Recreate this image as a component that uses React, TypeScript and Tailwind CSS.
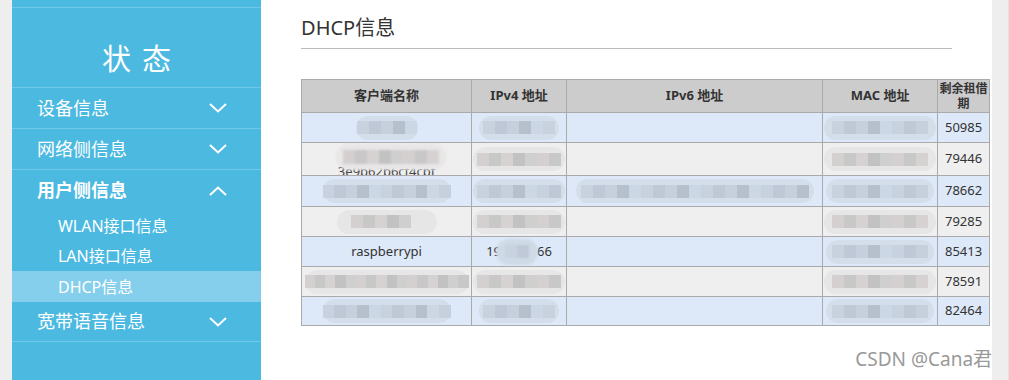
import React from 'react';

const font = { fontFamily: '"Noto Sans", "Noto Sans CJK SC", sans-serif' };

const Chevron = ({ up = false }: { up?: boolean }) => (
  <svg width="18" height="10" viewBox="0 0 18 10" className="mr-[34px]">
    <polyline
      points={up ? '1,9 9,1.5 17,9' : '1,1 9,8.5 17,1'}
      fill="none"
      stroke="white"
      strokeWidth="2"
    />
  </svg>
);

// pixelated blur blob used for masked values
const Blur = ({ className, cells, tone }: { className: string; cells: string[]; tone: 'blue' | 'gray' }) => (
  <div
    className={`${className} mx-auto h-[24px] rounded-full flex items-center justify-center blur-[0.6px] ${
      tone === 'blue' ? 'bg-[#d3deea]' : 'bg-[#e6e6e6]'
    }`}
  >
    {cells.map((c, i) => (
      <div key={i} className={`h-[13px] w-[12px] ${c}`} />
    ))}
  </div>
);

const blueCells = ['bg-[#c8d2df]', 'bg-[#bfc8d6]', 'bg-[#c6d0dd]', 'bg-[#b6bfcc]', 'bg-[#ccd7e5]'];
const grayCells = ['bg-[#d4d0d0]', 'bg-[#c8c8c8]', 'bg-[#d6d2d2]', 'bg-[#c2c2c2]', 'bg-[#d0cfcf]'];

type Row = {
  name: React.ReactNode;
  ip4: React.ReactNode;
  ip6?: React.ReactNode;
  mac: React.ReactNode;
  lease: string;
  h: string;
};

const rows: Row[] = [
  {
    name: <Blur className="w-[62px]" tone="blue" cells={blueCells.slice(0, 5)} />,
    ip4: <Blur className="w-[80px]" tone="blue" cells={[...blueCells, 'bg-[#c8d2df]']} />,
    mac: <Blur className="w-[112px]" tone="blue" cells={[...blueCells, ...blueCells.slice(0, 3)]} />,
    lease: '50985',
    h: 'h-[30px]',
  },
  {
    name: (
      <div className="relative h-[32px] flex items-end justify-center">
        <span className="leading-[14px] -mb-[3px] text-[#444]">3e9b62b6cf4cbf</span>
        <div className="absolute left-[34px] top-[1px] h-[26px] w-[110px] rounded-full bg-[#e8e6e6] blur-[1px] flex items-center justify-center">
          {[...grayCells, ...grayCells.slice(0, 3)].map((c, i) => (
            <div key={i} className={`h-[14px] w-[12px] ${c}`} />
          ))}
        </div>
      </div>
    ),
    ip4: <Blur className="w-[92px]" tone="gray" cells={[...grayCells, ...grayCells.slice(0, 2)]} />,
    mac: <Blur className="w-[112px]" tone="gray" cells={[...grayCells, ...grayCells.slice(0, 3)]} />,
    lease: '79446',
    h: 'h-[33px]',
  },
  {
    name: <Blur className="w-[128px]" tone="blue" cells={[...blueCells, ...blueCells, 'bg-[#c6d0dd]']} />,
    ip4: <Blur className="w-[92px]" tone="blue" cells={[...blueCells, ...blueCells.slice(0, 2)]} />,
    ip6: <Blur className="w-[238px]" tone="blue" cells={[...blueCells, ...blueCells, ...blueCells, ...blueCells.slice(0, 4)]} />,
    mac: <Blur className="w-[108px]" tone="blue" cells={[...blueCells, ...blueCells.slice(0, 3)]} />,
    lease: '78662',
    h: 'h-[31px]',
  },
  {
    name: <Blur className="w-[100px]" tone="gray" cells={[...grayCells, 'bg-[#e6e6e6]']} />,
    ip4: <Blur className="w-[92px]" tone="gray" cells={[...grayCells, ...grayCells.slice(0, 2)]} />,
    mac: <Blur className="w-[112px]" tone="gray" cells={[...grayCells, ...grayCells.slice(0, 3)]} />,
    lease: '79285',
    h: 'h-[30px]',
  },
  {
    name: <span>raspberrypi</span>,
    ip4: (
      <div className="relative flex justify-center">
        <span>
          19<span className="inline-block w-[36px]" />66
        </span>
        <div className="absolute left-[24px] top-[-3px] h-[26px] w-[42px] rounded-full bg-[#cfdae7] blur-[1px] flex items-center justify-center">
          <div className="h-[13px] w-[12px] bg-[#c8d3e0]" />
          <div className="h-[13px] w-[12px] bg-[#bfc9d7]" />
        </div>
      </div>
    ),
    mac: <Blur className="w-[108px]" tone="blue" cells={[...blueCells, ...blueCells.slice(0, 3)]} />,
    lease: '85413',
    h: 'h-[30px]',
  },
  {
    name: <Blur className="w-[164px]" tone="gray" cells={[...grayCells, ...grayCells, ...grayCells, 'bg-[#c8c8c8]']} />,
    ip4: <Blur className="w-[92px]" tone="gray" cells={[...grayCells, ...grayCells.slice(0, 2)]} />,
    mac: <Blur className="w-[112px]" tone="gray" cells={[...grayCells, ...grayCells.slice(0, 3)]} />,
    lease: '78591',
    h: 'h-[30px]',
  },
  {
    name: <Blur className="w-[128px]" tone="blue" cells={[...blueCells, ...blueCells, 'bg-[#c6d0dd]']} />,
    ip4: <Blur className="w-[80px]" tone="blue" cells={[...blueCells, 'bg-[#c8d2df]']} />,
    mac: <Blur className="w-[108px]" tone="blue" cells={[...blueCells, ...blueCells.slice(0, 3)]} />,
    lease: '82464',
    h: 'h-[29px]',
  },
];

const MenuItem = ({ label, bold = false, up = false }: { label: string; bold?: boolean; up?: boolean }) => (
  <div className="h-[41px] flex items-center justify-between border-b border-[#72c8e8] pl-[25px]">
    <span className={`text-[18px] ${bold ? 'font-bold' : ''}`}>{label}</span>
    <Chevron up={up} />
  </div>
);

export default function App() {
  return (
    <div className="flex w-[1009px] h-[380px] bg-white overflow-hidden text-[#333]" style={font}>
      <div className="w-[12px] bg-[#eeeeee]" />

      {/* sidebar */}
      <div className="w-[250px] bg-[#4cb9e1] text-white flex flex-col">
        <div className="mt-[7px] border-t border-[#72c8e8] h-[81px] border-b flex items-center justify-center">
          <span className="text-[29px] tracking-[11px] pl-[11px] mt-[22px]">状态</span>
        </div>
        <MenuItem label="设备信息" />
        <MenuItem label="网络侧信息" />
        <div className="h-[41px] flex items-center justify-between pl-[25px]">
          <span className="text-[18px] font-bold">用户侧信息</span>
          <Chevron up />
        </div>
        <div className="h-[30px] flex items-center pl-[46px] text-[16px]">WLAN接口信息</div>
        <div className="h-[30px] flex items-center pl-[46px] text-[16px]">LAN接口信息</div>
        <div className="h-[31px] flex items-center pl-[46px] text-[16px] bg-[#85cfec]">DHCP信息</div>
        <div className="h-[40px] flex items-center justify-between border-b border-[#72c8e8] pl-[25px]">
          <span className="text-[18px]">宽带语音信息</span>
          <Chevron />
        </div>
      </div>

      {/* content */}
      <div className="flex-1 pl-[40px] pr-[2px] relative">
        <div className="mr-[38px] mt-[14px] h-[35px] border-b border-[#bbbbbb] text-[20px] leading-[28px] text-[#333]">
          DHCP信息
        </div>
        <table className="mt-[30px] w-[688px] border-collapse text-[13px] table-fixed">
          <colgroup>
            <col className="w-[170px]" />
            <col className="w-[95px]" />
            <col className="w-[256px]" />
            <col className="w-[115px]" />
            <col className="w-[52px]" />
          </colgroup>
          <thead>
            <tr className="h-[33px] bg-[#cccccc] font-bold text-[#333]">
              <th className="border border-[#aaaaaa] font-bold">客户端名称</th>
              <th className="border border-[#aaaaaa] font-bold">IPv4 地址</th>
              <th className="border border-[#aaaaaa] font-bold">IPv6 地址</th>
              <th className="border border-[#aaaaaa] font-bold">MAC 地址</th>
              <th className="border border-[#aaaaaa] font-bold text-[12px] leading-[15px] px-0 whitespace-nowrap">
                剩余租借
                <br />期
              </th>
            </tr>
          </thead>
          <tbody>
            {rows.map((r, i) => (
              <tr key={i} className={`${r.h} ${i % 2 === 0 ? 'bg-[#dde8f8]' : 'bg-[#efefef]'}`}>
                <td className="border border-[#aaaaaa] text-center p-0 overflow-hidden">{r.name}</td>
                <td className="border border-[#aaaaaa] text-center p-0">{r.ip4}</td>
                <td className="border border-[#aaaaaa] text-center p-0">{r.ip6}</td>
                <td className="border border-[#aaaaaa] text-center p-0">{r.mac}</td>
                <td className="border border-[#aaaaaa] text-center p-0">{r.lease}</td>
              </tr>
            ))}
          </tbody>
        </table>
        <div className="absolute right-0 top-[347px] text-[19px] leading-[24px] text-[#999999]">CSDN @Cana君</div>
      </div>

      <div className="w-[17px] bg-[#eeeeee] border-r border-[#e2e2e2]" />
    </div>
  );
}
